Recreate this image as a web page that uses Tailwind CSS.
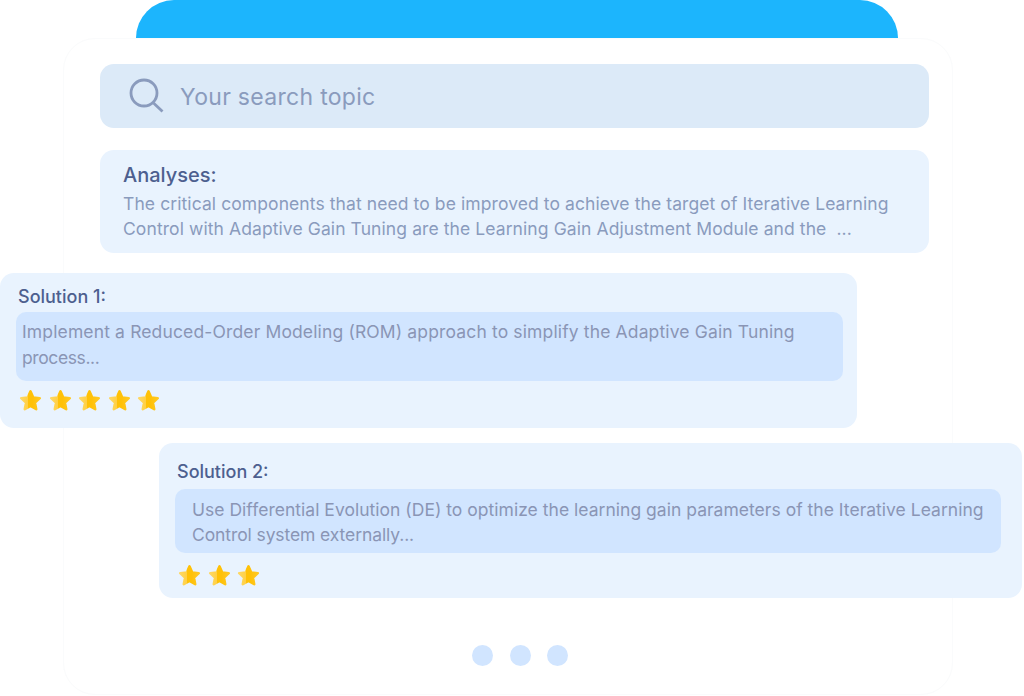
<!DOCTYPE html>
<html lang="en">
<head>
<meta charset="utf-8">
<title>Solutions</title>
<script src="https://cdn.jsdelivr.net/npm/@tailwindcss/browser@4"></script>
</head>
<body class="bg-white overflow-hidden font-['Inter',sans-serif]">
<svg width="0" height="0" class="absolute">
  <defs>
    <linearGradient id="st" x1="0" x2="1" y1="0" y2="0">
      <stop offset="0" stop-color="#ffd761"/><stop offset="0.36" stop-color="#ffd044"/><stop offset="0.38" stop-color="#ffc107"/><stop offset="0.6" stop-color="#ffc107"/><stop offset="1" stop-color="#ffc824"/>
    </linearGradient>
    <symbol id="star" viewBox="0 0 24 24">
      <path d="M12 2.500l2.900 6.300 6.800.8-5 4.700 1.300 6.800-6-3.400-6 3.400 1.300-6.800-5-4.700 6.800-.8z" fill="url(#st)" stroke="url(#st)" stroke-width="2.600" stroke-linejoin="round"/>
    </symbol>
  </defs>
</svg>
<div class="w-[1024px] h-[696px] flex flex-col items-start overflow-hidden">
  <div class="ml-[136px] w-[762px] h-[38px] shrink-0 rounded-t-[38px] bg-[#1cb5fd]"></div>
  <div class="ml-[63px] w-[890px] h-[657px] shrink-0 rounded-[32px] border border-[#fafbfc] px-[36px] pt-[25px] flex flex-col items-start">
    <div class="w-[829px] h-[64px] shrink-0 rounded-[14px] bg-[#dceaf8] flex items-center pl-[29px] gap-[14px]">
      <svg width="37" height="37" viewBox="0 0 37 37" fill="none" stroke="#8a9bbd" stroke-width="2.800"><circle cx="15" cy="15" r="13"/><path d="M24.500 25l9 8.500"/></svg>
      <span class="relative top-[1px] text-[23px] tracking-[0.3px] text-[#8a9bbd]">Your search topic</span>
    </div>
    <div class="mt-[22px] w-[829px] h-[103px] shrink-0 rounded-[14px] bg-[#e9f3fe] pl-[23px] pt-[11px]">
      <div class="text-[20px] leading-[28px] font-medium text-[#4d5f8f]">Analyses:</div>
      <p class="mt-[2px] text-[17.5px] leading-[25px] tracking-[0.09px] text-[#8a9bbd] whitespace-nowrap">The critical components that need to be improved to achieve the target of Iterative Learning<br>Control with Adaptive Gain Tuning are the Learning Gain Adjustment Module and the&nbsp; ...</p>
    </div>
    <div class="mt-[20px] -ml-[100px] w-[857px] h-[155px] shrink-0 rounded-[14px] bg-[#e9f3fe] pt-[10px] pl-[16px] flex flex-col items-start">
      <div class="pl-[2px] text-[18px] leading-[27px] font-medium text-[#4d5f8f]">Solution 1:</div>
      <p class="mt-[2px] w-[827px] h-[69px] rounded-[10px] bg-[#d1e5ff] pl-[6px] pt-[7px] text-[17.5px] leading-[25.500px] tracking-[0.14px] text-[#8a95b5] whitespace-nowrap">Implement a Reduced-Order Modeling (ROM) approach to simplify the Adaptive Gain Tuning<br><span class="tracking-[-0.4px]">process...</span></p>
      <div class="mt-[8px] pl-[3px] flex gap-[6.500px]">
        <svg width="23" height="23"><use href="#star"/></svg>
        <svg width="23" height="23"><use href="#star"/></svg>
        <svg width="23" height="23"><use href="#star"/></svg>
        <svg width="23" height="23"><use href="#star"/></svg>
        <svg width="23" height="23"><use href="#star"/></svg>
      </div>
    </div>
    <div class="mt-[15px] ml-[59px] w-[863px] h-[155px] shrink-0 rounded-[14px] bg-[#e9f3fe] pt-[15px] pl-[16px] flex flex-col items-start">
      <div class="pl-[2px] text-[18px] leading-[27px] font-medium text-[#4d5f8f]">Solution 2:</div>
      <p class="mt-[4px] w-[826px] h-[64px] rounded-[10px] bg-[#d1e5ff] pl-[17px] pt-[8px] text-[17.5px] leading-[25px] tracking-[0.02px] text-[#8a95b5] whitespace-nowrap">Use Differential Evolution (DE) to optimize the learning gain parameters of the Iterative Learning<br><span class="tracking-[-0.1px]">Control system externally...</span></p>
      <div class="mt-[11px] pl-[3px] flex gap-[6.500px]">
        <svg width="23" height="23"><use href="#star"/></svg>
        <svg width="23" height="23"><use href="#star"/></svg>
        <svg width="23" height="23"><use href="#star"/></svg>
      </div>
    </div>
    <div class="mt-[47px] ml-[372px] flex gap-[16.500px]">
      <div class="size-[21px] rounded-full bg-[#d1e5ff]"></div>
      <div class="size-[21px] rounded-full bg-[#d1e5ff]"></div>
      <div class="size-[21px] rounded-full bg-[#d1e5ff]"></div>
    </div>
  </div>
</div>
</body>
</html>
